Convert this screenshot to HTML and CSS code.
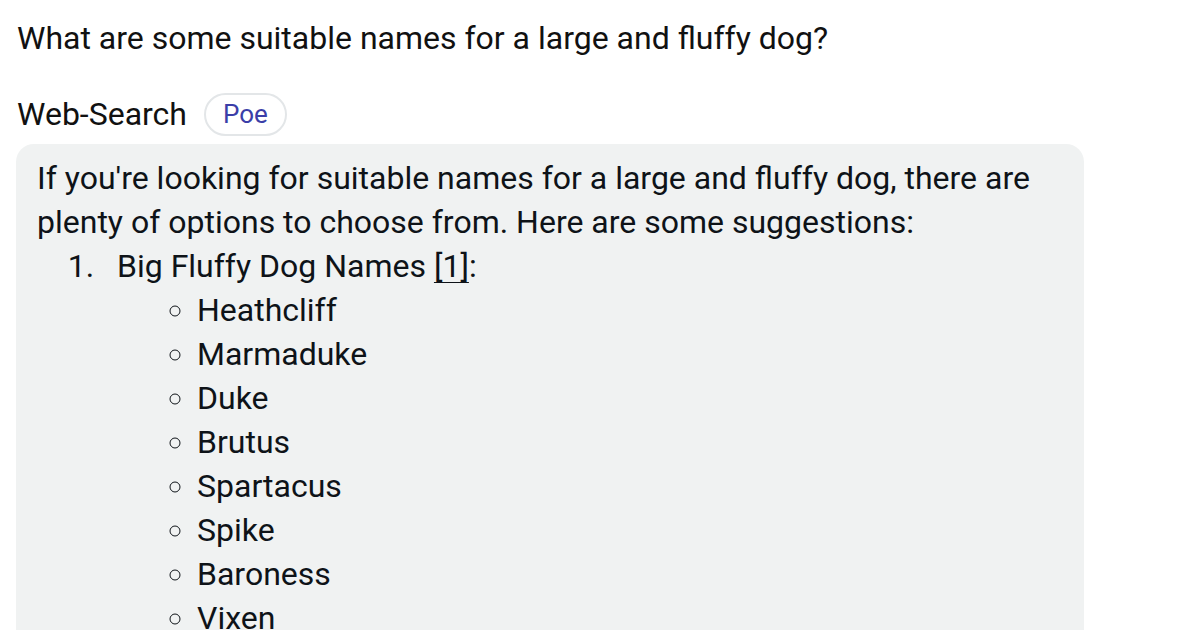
FILE: index.html
```html
<!DOCTYPE html>
<html lang="en">
<head>
  <meta charset="UTF-8">
  <title>Web-Search | Poe</title>
  <link rel="stylesheet" href="styles.css">
</head>
<body>

  <div class="question">What are some suitable names for a large and fluffy dog?</div>

  <div class="bot-header">
    <span class="bot-name">Web-Search</span>
    <span class="badge">Poe</span>
  </div>

  <div class="bubble">
    <p>If you're looking for suitable names for a large and fluffy dog, there are plenty of options to choose from. Here are some suggestions:</p>
    <ol>
      <li>Big Fluffy Dog Names <a href="#" class="cite">[1]</a>:
        <ul>
          <li>Heathcliff</li>
          <li>Marmaduke</li>
          <li>Duke</li>
          <li>Brutus</li>
          <li>Spartacus</li>
          <li>Spike</li>
          <li>Baroness</li>
          <li>Vixen</li>
          <li>Bear</li>
          <li>Moose</li>
        </ul>
      </li>
    </ol>
  </div>

</body>
</html>
```

FILE: styles.css
```css
body {
  margin: 0;
  padding: 16px 16px;
  font-family: 'Roboto', 'Noto Sans', sans-serif;
  font-size: 32px;
  line-height: 44px;
  color: #111111;
  background-color: #ffffff;
}
.question {
  padding-left: 1px;
  margin-bottom: 32px;
}
.bot-header {
  display: flex;
  align-items: center;
  gap: 17px;
  height: 44px;
  margin-bottom: 8px;
  padding-left: 1px;
}
.badge {
  font-size: 26px;
  line-height: 39px;
  color: #3b3ea8;
  border: 2px solid #e3e6e8;
  border-radius: 22px;
  padding: 0 17px;
}
.bubble {
  width: 1068px;
  box-sizing: border-box;
  background-color: #f0f2f2;
  border-radius: 18px;
  padding: 12px 20px 12px 21px;
  color: #0e1318;
}
.bubble p {
  margin: 0;
}
.bubble ol,
.bubble ul {
  margin: 0;
  padding-left: 80px;
}
.bubble ol > li::marker {
  content: counter(list-item) ".\2002\2009";
}
.bubble ul {
  list-style-type: circle;
}
.cite {
  color: inherit;
  text-decoration: underline;
  text-decoration-thickness: 1px;
  text-underline-offset: 5px;
}
```
